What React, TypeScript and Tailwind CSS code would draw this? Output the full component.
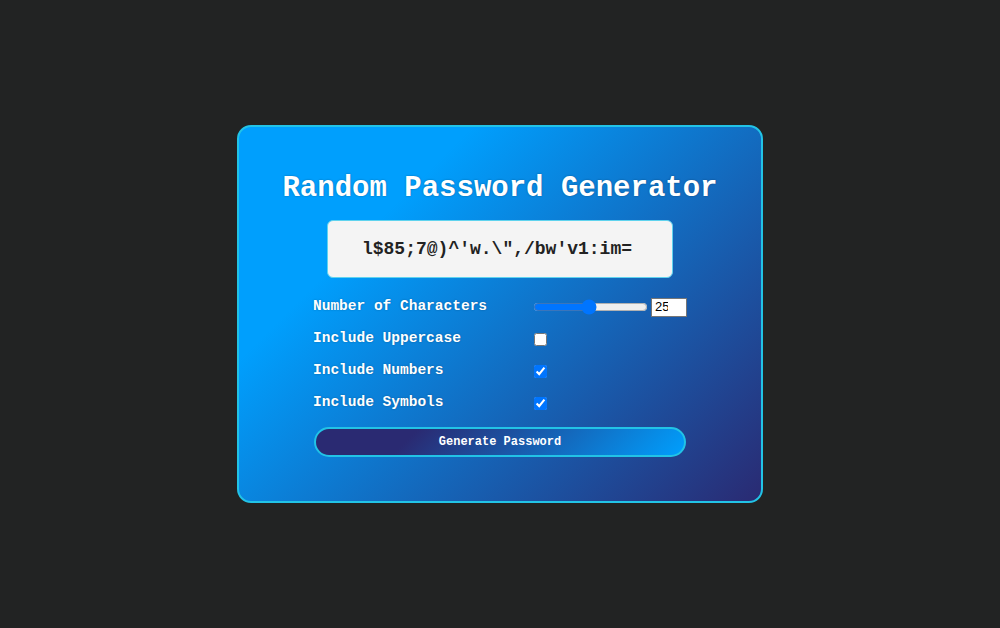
import React, { useState } from 'react';

const rows = [
  { label: 'Include Uppercase', checked: false },
  { label: 'Include Numbers', checked: true },
  { label: 'Include Symbols', checked: true },
];

export default function App() {
  const [length, setLength] = useState(25);
  const [opts, setOpts] = useState(rows.map(r => r.checked));

  return (
    <div className="w-full h-[628px] bg-[#222323] flex items-center justify-center font-['Liberation_Mono','Courier_New',monospace]">
      <div className="w-[526px] h-[378px] rounded-[14px] border-2 border-[#22c3e6] bg-[linear-gradient(315deg,#2a2a72_0%,#009ffd_74%)] flex flex-col items-center pt-[47px]">
        <h1 className="text-[29px] font-bold text-white leading-none [text-shadow:0_0_2px_rgba(0,0,0,0.35)]">
          Random Password Generator
        </h1>
        <div className="mt-[17px] w-[346px] h-[58px] rounded-[6px] bg-[#f4f4f4] border border-[#5fd3ee] flex items-center justify-center">
          <span className="text-[18px] font-bold text-[#222] pr-[6px]">l$85;7@)^'w.\",/bw'v1:im=</span>
        </div>
        <div className="mt-[13px] w-[374px] flex flex-col">
          <div className="h-[32px] flex items-center">
            <span className="w-[220px] text-[14.5px] font-bold text-white [text-shadow:0_0_2px_rgba(0,0,0,0.3)]">Number of Characters</span>
            <input
              type="range"
              min={1}
              max={50}
              value={length}
              onChange={e => setLength(Number(e.target.value))}
              className="w-[115px] h-[16px] m-0"
            />
            <input
              type="number"
              value={length}
              onChange={e => setLength(Number(e.target.value))}
              className="ml-[3px] w-[36px] h-[19px] bg-white border border-[#767676] text-[13px] text-black px-[3px] font-['Liberation_Sans',Arial,sans-serif]"
            />
          </div>
          {rows.map((r, i) => (
            <div key={r.label} className="h-[32px] flex items-center">
              <span className="w-[220px] text-[14.5px] font-bold text-white [text-shadow:0_0_2px_rgba(0,0,0,0.3)]">{r.label}</span>
              <input
                type="checkbox"
                checked={opts[i]}
                onChange={() => setOpts(opts.map((o, j) => (j === i ? !o : o)))}
                className="w-[13px] h-[13px] m-0 ml-[1px]"
              />
            </div>
          ))}
          <button className="mt-[8px] ml-[1px] w-[372px] h-[30px] rounded-full border-2 border-[#22c3e6] bg-[linear-gradient(315deg,#009ffd_0%,#2a2a72_74%)] text-white text-[12px] font-bold font-['Liberation_Mono','Courier_New',monospace]">
            Generate Password
          </button>
        </div>
      </div>
    </div>
  );
}
